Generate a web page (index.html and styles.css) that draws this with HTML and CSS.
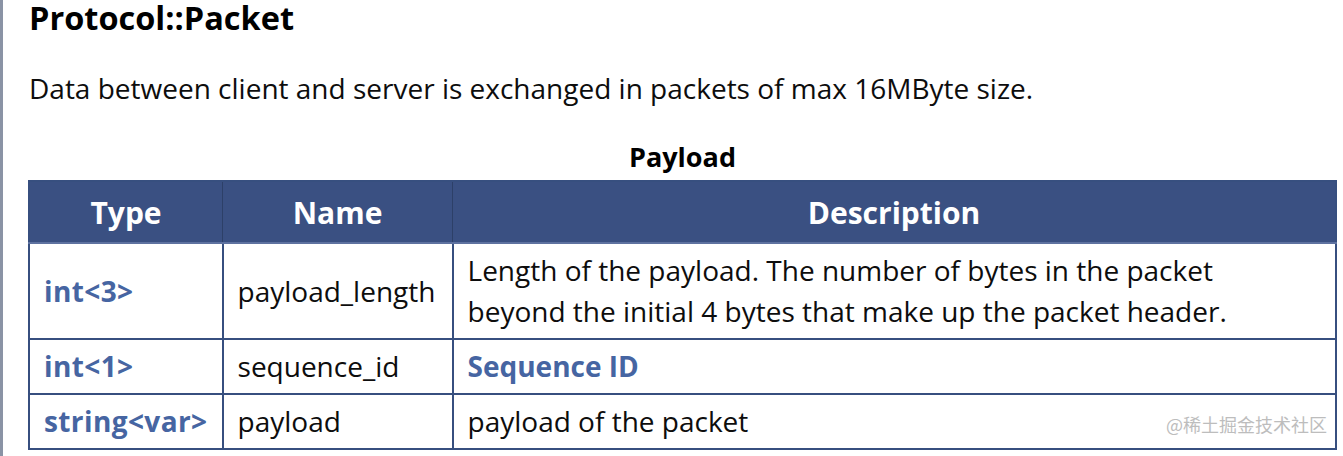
FILE: index.html
```html
<!DOCTYPE html>
<html lang="en">
<head>
<meta charset="utf-8">
<title>Protocol::Packet</title>
<link rel="stylesheet" href="styles.css">
</head>
<body>
<div class="page">
  <div class="content">
    <h1 class="title">Protocol::Packet</h1>
    <p class="intro">Data between client and server is exchanged in packets of max 16MByte size.</p>
    <table class="fields">
      <caption>Payload</caption>
      <thead>
        <tr><th class="c-type">Type</th><th class="c-name">Name</th><th class="c-desc">Description</th></tr>
      </thead>
      <tbody>
        <tr>
          <td class="type">int&lt;3&gt;</td>
          <td>payload_length</td>
          <td>Length of the payload. The number of bytes in the packet<br>beyond the initial 4 bytes that make up the packet header.</td>
        </tr>
        <tr>
          <td class="type">int&lt;1&gt;</td>
          <td>sequence_id</td>
          <td><a class="link" href="#">Sequence ID</a></td>
        </tr>
        <tr>
          <td class="type">string&lt;var&gt;</td>
          <td>payload</td>
          <td>payload of the packet</td>
        </tr>
      </tbody>
    </table>
  </div>
  <span class="watermark">@稀土掘金技术社区</span>
</div>
</body>
</html>
```

FILE: styles.css
```css
html, body {
  margin: 0;
  padding: 0;
  background: #ffffff;
}

body {
  font-family: "Open Sans", "Noto Sans", "Noto Sans CJK SC", sans-serif;
  color: #0d0d0d;
}

.page {
  position: relative;
  height: 456px;
  border-left: 3px solid #8a93a5;
  padding-left: 25px;
  padding-right: 6px;
  box-sizing: border-box;
  overflow: hidden;
}

.content {
  display: flex;
  flex-direction: column;
}

.title {
  margin: 0;
  padding-top: 1px;
  padding-left: 1px;
  font-size: 32.5px;
  font-weight: 700;
  line-height: 34px;
  color: #000;
}

.intro {
  margin: 36px 0 0 0;
  padding-left: 1px;
  font-size: 28px;
  line-height: 34px;
}

.fields {
  margin-top: 37px;
  width: 100%;
  border-collapse: collapse;
  border: 2px solid #374f7f;
  font-size: 28px;
}

.fields caption {
  font-weight: 700;
  font-size: 27px;
  line-height: 30px;
  padding-bottom: 8px;
  color: #000;
}

.fields th {
  background: #3a5082;
  color: #ffffff;
  font-size: 30px;
  font-weight: 700;
  height: 60px;
  padding: 0;
  border: 1px solid #2d4068;
  border-bottom: 2px solid #5e72a0;
}

.c-type { width: 191px; }
.c-name { width: 229px; }

.fields td {
  border: 2px solid #374f7f;
  padding: 6px 14px;
  line-height: 41px;
  vertical-align: middle;
  text-align: left;
}

.fields td.type {
  font-weight: 700;
  color: #4665a2;
  letter-spacing: 0.4px;
}

.link {
  color: #4665a2;
  font-weight: 700;
  text-decoration: none;
}

.watermark {
  position: absolute;
  right: 16px;
  bottom: 19px;
  font-size: 18px;
  color: #bdbdbd;
  font-family: "Noto Sans CJK SC", sans-serif;
}
```
